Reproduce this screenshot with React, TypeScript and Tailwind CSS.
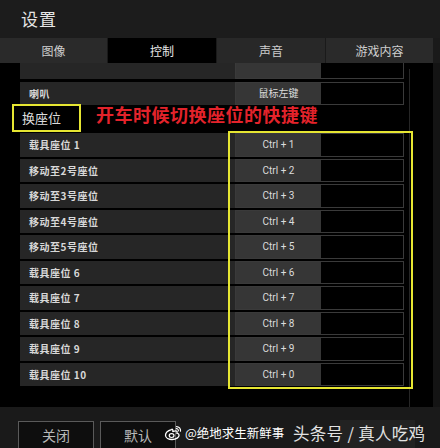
import React from "react";

const rows: [string, string][] = [
  ["载具座位 1", "Ctrl + 1"],
  ["移动至2号座位", "Ctrl + 2"],
  ["移动至3号座位", "Ctrl + 3"],
  ["移动至4号座位", "Ctrl + 4"],
  ["移动至5号座位", "Ctrl + 5"],
  ["载具座位 6", "Ctrl + 6"],
  ["载具座位 7", "Ctrl + 7"],
  ["载具座位 8", "Ctrl + 8"],
  ["载具座位 9", "Ctrl + 9"],
  ["载具座位 10", "Ctrl + 0"],
];

const cjk = { fontFamily: '"Noto Sans CJK SC", "Noto Sans", sans-serif' };
const latin = { fontFamily: 'Roboto, "Noto Sans CJK SC", sans-serif' };

function Row({ label, keyText, className = "" }: { label: string; keyText: string; className?: string }) {
  return (
    <div className={`flex h-[23.5px] ${className}`}>
      <div className="flex-1 bg-[#262626] flex items-center pl-[9px] text-[10px] text-[#d8d8d8] font-bold tracking-[0.5px]" style={cjk}>
        {label}
      </div>
      <div className="w-[169px] flex border border-[#3a3a3a]">
        <div className="w-[85px] bg-[#363636] flex items-center justify-center text-[10px] text-[#dcdcdc]" style={latin}>
          {keyText}
        </div>
        <div className="flex-1 bg-black"></div>
      </div>
    </div>
  );
}

export default function App() {
  return (
    <div className="w-[440px] h-[448px] bg-black flex flex-col relative overflow-hidden" style={cjk}>
      <div className="h-[38px] bg-[#1c1c1c] flex items-center pl-[21px] text-[17px] text-[#e6e6e6] tracking-[1px]">
        设置
      </div>
      <div className="h-[25px] bg-[#1a1a1a] flex gap-[1px]">
        <div className="w-[107px] bg-[#2a2a2a] flex items-center justify-center text-[12px] text-[#cfcfcf]">图像</div>
        <div className="w-[108px] bg-black flex items-center justify-center text-[12px] text-[#e8e8e8]">控制</div>
        <div className="w-[108px] bg-[#282828] flex items-center justify-center text-[12px] text-[#cfcfcf]">声音</div>
        <div className="w-[107px] bg-[#2a2a2a] flex items-center justify-center text-[12px] text-[#cfcfcf]">游戏内容</div>
      </div>
      <div className="flex-1 flex overflow-hidden">
        <div className="w-[20px]"></div>
        <div className="w-[384px] flex flex-col mt-[-7.5px]">
          <Row label="" keyText="" />
          <Row label="喇叭" keyText="鼠标左键" className="mt-[2.5px]" />
          <div className="h-[26px] flex items-center pl-[2px] text-[13px] text-[#dcdcdc]">换座位</div>
          {rows.map(([l, k], i) => (
            <Row key={i} label={l} keyText={k} className="mt-[2px]" />
          ))}
        </div>
        <div className="w-[29px] flex">
          <div className="w-[5px]"></div>
          <div className="w-[1px] bg-[#262626] mt-[6px]"></div>
        </div>
        <div className="flex-1 bg-[#141414]"></div>
      </div>
      <div className="h-[41px] bg-[#1a1a1a] flex items-start pt-[14px] pl-[18px] gap-[6px]">
        <div className="w-[76px] h-[28px] border border-[#5a5a5a] bg-[#0e0e0e] flex items-center justify-center text-[14px] text-[#b8b8b8]">关闭</div>
        <div className="w-[76px] h-[28px] border border-[#5a5a5a] bg-[#0e0e0e] flex items-center justify-center text-[14px] text-[#b8b8b8]">默认</div>
      </div>

      {/* annotations */}
      <div className="absolute left-[12px] top-[104px] w-[69px] h-[28px] border-[2px] border-[#e6e632]"></div>
      <div className="absolute left-[228px] top-[131px] w-[185px] h-[258px] border-[2px] border-[#e6e632]"></div>
      <div className="absolute left-[96px] top-[102px] text-[18px] font-bold text-[#e3232b] leading-[24px] tracking-[0.5px]">
        开车时候切换座位的快捷键
      </div>

      {/* watermarks */}
      <div className="absolute left-[164px] top-[424px] flex items-center gap-[3px] text-[12.5px] text-white">
        <svg width="18" height="16" viewBox="0 0 18 16">
          <path d="M7.5 4.5C4 5.5 1.5 8 1.5 10.3c0 2.6 3.2 4.2 6.6 4.2 4.2 0 7-2.2 7-4.2 0-1.6-1.6-2-2.2-2.1.6-1.4.2-2.6-1.7-2.4-1.3.1-2.2.8-2.4.7.3-1.6-.4-2.6-1.3-2z" fill="none" stroke="#fff" strokeWidth="1.3" />
          <ellipse cx="7.6" cy="10.6" rx="2.4" ry="1.9" fill="none" stroke="#fff" strokeWidth="1.2" />
          <path d="M12.5 1.6a4 4 0 0 1 4 4.6" fill="none" stroke="#fff" strokeWidth="1.2" strokeLinecap="round" />
          <path d="M12.3 3.6a2 2 0 0 1 2.1 2.3" fill="none" stroke="#fff" strokeWidth="1.1" strokeLinecap="round" />
        </svg>
        <span>@绝地求生新鲜事</span>
      </div>
      <div className="absolute left-[340px] top-[420px] w-[75px] h-[28px] bg-[#222222]"></div>
      <div className="absolute left-[293px] top-[421px] text-[16.5px] text-[#e2e2e2] leading-[24px] tracking-[0.3px]">
        头条号 / 真人吃鸡
      </div>
    </div>
  );
}
